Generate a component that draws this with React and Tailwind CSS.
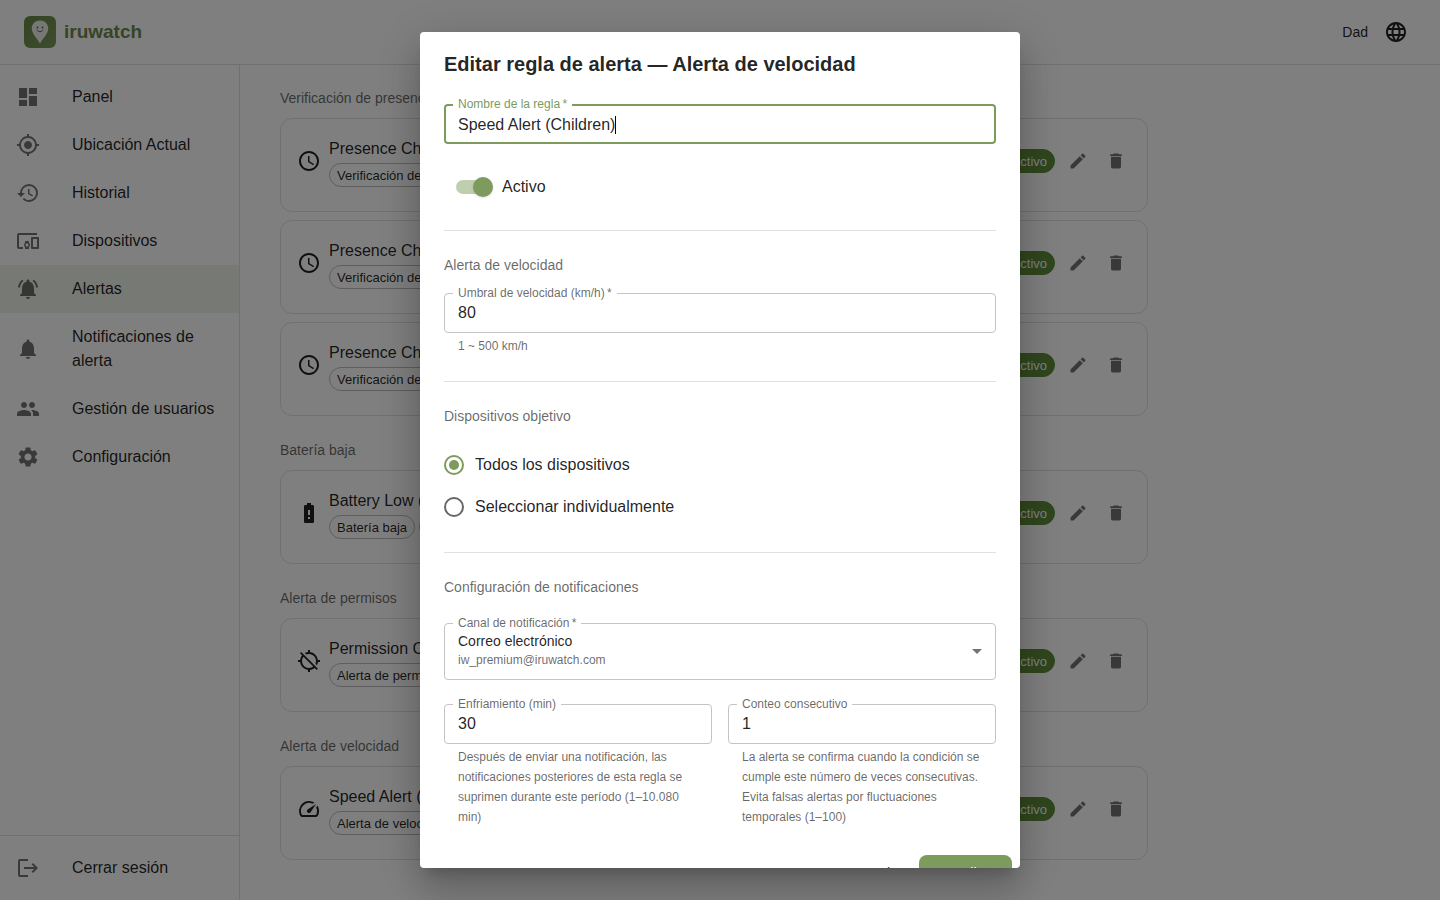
import React, { useState } from 'react';
import {
  MdAccessTime,
  MdArrowDropDown,
  MdBatteryAlert,
  MdDashboard,
  MdDelete,
  MdDevicesOther,
  MdEdit,
  MdGpsFixed,
  MdGpsOff,
  MdHistory,
  MdLanguage,
  MdLogout,
  MdNotifications,
  MdNotificationsActive,
  MdPeople,
  MdSettings,
  MdSpeed,
} from 'react-icons/md';

const menuItems = [
  { label: 'Panel', icon: MdDashboard },
  { label: 'Ubicación Actual', icon: MdGpsFixed },
  { label: 'Historial', icon: MdHistory },
  { label: 'Dispositivos', icon: MdDevicesOther },
  { label: 'Alertas', icon: MdNotificationsActive, active: true },
  { label: 'Notificaciones de alerta', icon: MdNotifications },
  { label: 'Gestión de usuarios', icon: MdPeople },
  { label: 'Configuración', icon: MdSettings },
];

const ruleGroups = [
  {
    title: 'Verificación de presencia',
    icon: MdAccessTime,
    rules: [
      { id: 1, name: 'Presence Check (Morning)' },
      { id: 2, name: 'Presence Check (Afternoon)' },
      { id: 3, name: 'Presence Check (Evening)' },
    ],
  },
  { title: 'Batería baja', icon: MdBatteryAlert, rules: [{ id: 4, name: 'Battery Low (Children)' }] },
  { title: 'Alerta de permisos', icon: MdGpsOff, rules: [{ id: 5, name: 'Permission Changed' }] },
  { title: 'Alerta de velocidad', icon: MdSpeed, rules: [{ id: 6, name: 'Speed Alert (Children)' }] },
];

const Logo = () => (
  <svg viewBox="0 0 32 32" className="size-8" aria-hidden="true">
    <defs>
      <linearGradient id="logo-bg" x1="0" y1="0" x2="1" y2="1">
        <stop offset="0" stopColor="#668646" />
        <stop offset="1" stopColor="#7d9b5d" />
      </linearGradient>
    </defs>
    <rect width="32" height="32" rx="6" fill="url(#logo-bg)" />
    <path d="M16 4.5c-4.6 0-8.2 3.5-8.2 7.9 0 5.2 5 9.6 8.2 15 3.2-5.4 8.2-9.8 8.2-15 0-4.4-3.6-7.9-8.2-7.9z" fill="#eef1ea" />
    <circle cx="13.5" cy="11.5" r="0.9" fill="#4c5a3c" />
    <circle cx="18.5" cy="11.5" r="0.9" fill="#4c5a3c" />
    <path d="M13 14.2c1.5 2 4.500 2 6 0" fill="none" stroke="#4c5a3c" strokeWidth="0.9" strokeLinecap="round" />
  </svg>
);

const Chip = ({ filled, children }) => (
  <span
    className={`flex h-6 items-center rounded-full border px-[7px] pt-px text-[13px] ${filled ? 'border-[#5e8d3a] bg-[#5e8d3a] text-white' : 'border-[#bdbdbd]'}`}
  >
    {children}
  </span>
);

const RuleCard = ({ rule, category, icon: Icon }) => (
  <div className="flex items-center gap-2 rounded-xl border border-[#e0e0e0] bg-white px-4 pt-4 pb-6">
    <Icon className="size-6 shrink-0" />
    <div className="min-w-0 flex-1">
      <div className="truncate leading-7">{rule.name}</div>
      <div className="flex gap-1">
        <Chip>{category}</Chip>
        <Chip>Todos</Chip>
      </div>
    </div>
    <Chip filled>Activo</Chip>
    <button type="button" aria-label="Editar" className="p-[5px] text-black/55">
      <MdEdit className="size-5" />
    </button>
    <button type="button" aria-label="Eliminar" className="p-[5px] text-black/55">
      <MdDelete className="size-5" />
    </button>
  </div>
);

const FieldLabel = ({ htmlFor, required, focused, children }) => (
  <label
    htmlFor={htmlFor}
    className={`absolute -top-2 left-[9px] bg-white px-[5px] text-xs leading-4 ${focused ? 'text-[#7d9b5d]' : 'text-black/60'}`}
  >
    {children}
    {required && '\u2009*'}
  </label>
);

const TextField = ({ id, label, required, helper, value, onChange }) => (
  <div>
    <div className="relative">
      <input
        id={id}
        value={value}
        onChange={(e) => onChange(e.target.value)}
        className="block h-10 w-full rounded border border-[#c4c4c4] bg-white px-[13px] outline-none"
      />
      <FieldLabel htmlFor={id} required={required}>{label}</FieldLabel>
    </div>
    <p className="mt-[3px] px-3.5 text-xs leading-5 text-black/60">{helper}</p>
  </div>
);

const SectionTitle = ({ children }) => (
  <h3 className="pb-0.5 text-sm leading-5 text-black/60">{children}</h3>
);

const EditRuleDialog = () => {
  const [name, setName] = useState('Speed Alert (Children)');
  const [active, setActive] = useState(true);
  const [speed, setSpeed] = useState('80');
  const [target, setTarget] = useState('all');
  const [cooldown, setCooldown] = useState('30');
  const [count, setCount] = useState('1');

  const targets = [
    { value: 'all', label: 'Todos los dispositivos' },
    { value: 'selected', label: 'Seleccionar individualmente' },
  ];

  return (
    <div className="fixed inset-0 flex items-center justify-center bg-black/50 p-8">
      <div
        role="dialog"
        aria-modal="true"
        aria-labelledby="dialog-title"
        className="max-h-full w-full max-w-[600px] overflow-y-auto rounded bg-white shadow-[0_11px_15px_-7px_rgba(0,0,0,0.2),0_24px_38px_3px_rgba(0,0,0,0.14),0_9px_46px_8px_rgba(0,0,0,0.12)] [scrollbar-width:none]"
      >
        <h2 id="dialog-title" className="px-6 py-4 text-xl leading-8 font-bold">
          Editar regla de alerta — Alerta de velocidad
        </h2>

        <form className="px-6 pt-2 pb-5">
          <div className="relative">
            <input
              id="rule-name"
              value={name}
              onChange={(e) => setName(e.target.value)}
              className="block h-10 w-full rounded border-2 border-[#7d9b5d] bg-white px-3 pt-0.5 caret-transparent outline-none"
            />
            <FieldLabel htmlFor="rule-name" required focused>Nombre de la regla</FieldLabel>
            <span className="absolute top-3 left-[171px] h-[18px] w-px bg-black" />
          </div>

          <label className="mt-6 flex h-[38px] items-center">
            <span className="relative flex h-full w-[58px] items-center px-3">
              <input
                type="checkbox"
                role="switch"
                checked={active}
                onChange={(e) => setActive(e.target.checked)}
                className="peer h-3.5 w-[34px] appearance-none rounded-full bg-black/40 checked:bg-[#bfceaf]"
              />
              <span className="absolute left-[9px] size-5 rounded-full bg-white shadow peer-checked:left-[29px] peer-checked:bg-[#7d9b5d]" />
            </span>
            Activo
          </label>

          <section className="mt-6 border-t border-[#e0e0e0] pt-6 pb-px">
            <SectionTitle>Alerta de velocidad</SectionTitle>
            <div className="mt-4">
              <TextField
                id="speed"
                label="Umbral de velocidad (km/h)"
                required
                helper="1 ~ 500 km/h"
                value={speed}
                onChange={setSpeed}
              />
            </div>
          </section>

          <section className="mt-6 border-t border-[#e0e0e0] pt-6">
            <SectionTitle>Dispositivos objetivo</SectionTitle>
            <div className="mt-4">
              {targets.map((item) => (
                <label key={item.value} className="flex h-[42px] items-center gap-[11px]">
                  <input
                    type="radio"
                    name="target"
                    checked={target === item.value}
                    onChange={() => setTarget(item.value)}
                    className="grid size-5 appearance-none place-items-center rounded-full border-2 border-black/60 before:size-2.5 before:rounded-full checked:border-[#7d9b5d] checked:before:bg-[#7d9b5d]"
                  />
                  {item.label}
                </label>
              ))}
            </div>
          </section>

          <section className="mt-6 border-t border-[#e0e0e0] pt-6">
            <SectionTitle>Configuración de notificaciones</SectionTitle>
            <div className="relative mt-6">
              <select
                id="channel"
                className="block h-[57px] w-full appearance-none rounded border border-[#c4c4c4] bg-white px-[13px] pt-[7px] pb-7 text-sm leading-5 outline-none"
              >
                <option>Correo electrónico</option>
              </select>
              <FieldLabel htmlFor="channel" required>Canal de notificación</FieldLabel>
              <span className="pointer-events-none absolute bottom-2.5 left-3.5 text-xs leading-5 text-black/60">
                iw_premium@iruwatch.com
              </span>
              <MdArrowDropDown className="pointer-events-none absolute top-4 right-[7px] size-6 text-black/55" />
            </div>
            <div className="mt-6 grid grid-cols-2 gap-4">
              <TextField
                id="cooldown"
                label="Enfriamiento (min)"
                helper="Después de enviar una notificación, las notificaciones posteriores de esta regla se suprimen durante este período (1–10.080 min)"
                value={cooldown}
                onChange={setCooldown}
              />
              <TextField
                id="count"
                label="Conteo consecutivo"
                helper="La alerta se confirma cuando la condición se cumple este número de veces consecutivas. Evita falsas alertas por fluctuaciones temporales (1–100)"
                value={count}
                onChange={setCount}
              />
            </div>
          </section>
        </form>

        <div className="flex justify-end gap-2 p-2 text-sm leading-6">
          <button type="button" className="rounded-lg px-2 py-1.5">Cancelar</button>
          <button type="button" className="rounded-lg bg-[#7d9b5d] px-4 py-1.5 text-white">Actualizar</button>
        </div>
      </div>
    </div>
  );
};

const App = () => {
  return (
    <div className="flex min-h-screen flex-col bg-white font-['Liberation_Sans',Arial,sans-serif] text-base text-black/87">
      <header className="flex h-[65px] items-center justify-between border-b border-[#e0e0e0] px-6">
        <a href="#" className="flex items-center gap-2 text-[19px] font-bold text-[#6b8a4b]">
          <Logo />
          iruwatch
        </a>
        <div className="flex items-center gap-2 text-sm">
          Dad
          <button type="button" aria-label="Idioma" className="p-2">
            <MdLanguage className="size-6" />
          </button>
        </div>
      </header>

      <div className="flex flex-1">
        <aside className="flex w-60 shrink-0 flex-col border-r border-[#e0e0e0]">
          <nav className="flex-1 py-2">
            {menuItems.map(({ label, icon: Icon, active }) => (
              <a
                key={label}
                href="#"
                className={`flex items-center gap-8 px-4 py-3 leading-6 ${active ? 'bg-[#7d9b5d]/12' : ''}`}
              >
                <Icon className="size-6 shrink-0 text-black/55" />
                {label}
              </a>
            ))}
          </nav>
          <div className="border-t border-[#e0e0e0] py-2">
            <button type="button" className="flex w-full items-center gap-8 px-4 py-3 text-left leading-6">
              <MdLogout className="size-6 shrink-0 text-black/55" />
              Cerrar sesión
            </button>
          </div>
        </aside>

        <main className="min-w-0 flex-1 px-6 pt-[23px]">
          <div className="flex max-w-[900px] flex-col gap-6 px-4">
            {ruleGroups.map((group) => (
              <section key={group.title} className="flex flex-col gap-2">
                <h2 className="pb-0.5 text-sm leading-5 text-black/60">{group.title}</h2>
                {group.rules.map((rule) => (
                  <RuleCard key={rule.id} rule={rule} category={group.title} icon={group.icon} />
                ))}
              </section>
            ))}
          </div>
        </main>
      </div>

      <EditRuleDialog />
    </div>
  );
};

export default App;
